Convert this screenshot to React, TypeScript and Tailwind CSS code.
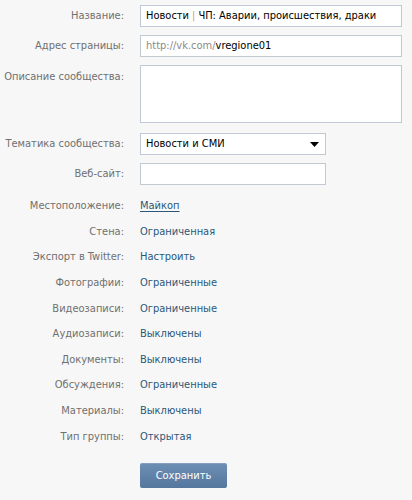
const settings = [
  { label: 'Стена:', value: 'Ограниченная' },
  { label: 'Экспорт в Twitter:', value: 'Настроить' },
  { label: 'Фотографии:', value: 'Ограниченные' },
  { label: 'Видеозаписи:', value: 'Ограниченные' },
  { label: 'Аудиозаписи:', value: 'Выключены' },
  { label: 'Документы:', value: 'Выключены' },
  { label: 'Обсуждения:', value: 'Ограниченные' },
  { label: 'Материалы:', value: 'Выключены' },
  { label: 'Тип группы:', value: 'Открытая' },
];

function Label({ children, top = false }: { children: string; top?: boolean }) {
  return (
    <div className={`w-[124px] shrink-0 text-right whitespace-nowrap text-[#707070] ${top ? 'pt-[5px]' : ''}`}>
      {children}
    </div>
  );
}

export default function App() {
  return (
    <div
      className="w-[412px] h-[500px] bg-[#f7f7f7] pt-[5px] text-[11px] leading-[14px]"
      style={{ fontFamily: '"DejaVu Sans Condensed", "Liberation Sans", sans-serif' }}
    >
      {/* Text fields */}
      <div className="flex flex-col gap-[8px]">
        <div className="flex items-center gap-[16px]">
          <Label>Название:</Label>
          <div className="w-[262px] h-[22px] flex items-center px-[5px] bg-white border border-[#c0cad5] text-black whitespace-nowrap overflow-hidden">
            Новости <span className="text-[#e0a040] mx-[3px]">|</span> ЧП: Аварии, происшествия, драки
          </div>
        </div>
        <div className="flex items-center gap-[16px]">
          <Label>Адрес страницы:</Label>
          <div className="w-[262px] h-[22px] flex items-center px-[5px] bg-white border border-[#c0cad5]">
            <span className="text-[#8a8a8a]">http://vk.com/</span>
            <span className="text-black">vregione01</span>
          </div>
        </div>
        <div className="flex items-start gap-[16px]">
          <Label top>Описание сообщества:</Label>
          <div className="w-[262px] h-[58px] bg-white border border-[#c0cad5]" />
        </div>
        <div className="flex items-center gap-[16px] mt-[2px]">
          <Label>Тематика сообщества:</Label>
          <div className="w-[186px] h-[22px] flex items-center justify-between px-[5px] bg-white border border-[#c0cad5] text-black">
            <span>Новости и СМИ</span>
            <svg width="9" height="5" viewBox="0 0 9 5" className="mr-[1px]">
              <path d="M0 0h9L4.5 5z" fill="#000" />
            </svg>
          </div>
        </div>
        <div className="flex items-center gap-[16px]">
          <Label>Веб-сайт:</Label>
          <div className="w-[186px] h-[22px] bg-white border border-[#c0cad5]" />
        </div>
      </div>

      {/* Settings */}
      <div className="flex flex-col mt-[8px]">
        <div className="flex items-center gap-[16px] h-[26px]">
          <Label>Местоположение:</Label>
          <span className="text-[#2b587a] underline underline-offset-2">Майкоп</span>
        </div>
        {settings.map((s) => (
          <div key={s.label} className="flex items-center gap-[16px] h-[25.6px]">
            <Label>{s.label}</Label>
            <span className="text-[#2b587a]">{s.value}</span>
          </div>
        ))}
      </div>

      <div className="pl-[140px] mt-[14px]">
        <button className="w-[87px] h-[25px] rounded-[2px] bg-gradient-to-b from-[#6d8fb4] to-[#55779e] text-white shadow-[inset_0_1px_0_rgba(255,255,255,0.15)]">
          Сохранить
        </button>
      </div>
    </div>
  );
}
